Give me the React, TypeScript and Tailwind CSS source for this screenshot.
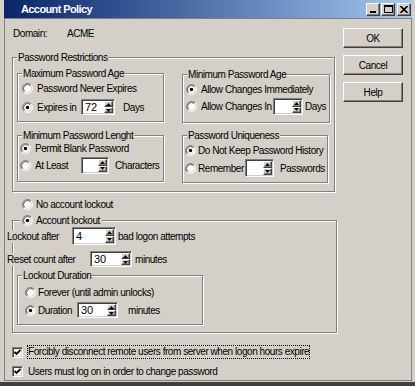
import React from "react";

const sunken =
  "border border-t-[#808080] border-l-[#808080] border-b-white border-r-white shadow-[inset_1px_1px_0_#404040,inset_-1px_-1px_0_#d4d0c8]";
const raised =
  "border border-t-white border-l-white border-b-[#404040] border-r-[#404040] shadow-[inset_-1px_-1px_0_#808080]";

function Radio({ checked }: { checked?: boolean }) {
  return (
    <svg width="11" height="11" viewBox="0 0 12 12" className="shrink-0">
      <circle cx="6" cy="6" r="5" fill="#fff" />
      <path d="M2.11 9.89A5.5 5.5 0 0 1 9.89 2.11" stroke="#808080" fill="none" strokeWidth="1" />
      <path d="M9.89 2.11A5.5 5.5 0 0 1 2.11 9.89" stroke="#ffffff" fill="none" strokeWidth="1" />
      <path d="M2.82 9.18A4.5 4.5 0 0 1 9.18 2.82" stroke="#404040" fill="none" strokeWidth="1" />
      <path d="M9.18 2.82A4.5 4.5 0 0 1 2.82 9.18" stroke="#d4d0c8" fill="none" strokeWidth="1" />
      {checked && <circle cx="6" cy="6" r="1.9" fill="#000" />}
    </svg>
  );
}

function Check() {
  return (
    <div className={`${sunken} bg-white w-[11px] h-[11px] flex items-center justify-center shrink-0`}>
      <svg width="7" height="7" viewBox="0 0 7 7">
        <polyline points="0.5,3 2.5,5 6.5,1" stroke="#000" strokeWidth="1.8" fill="none" />
      </svg>
    </div>
  );
}

function SpinButton({ up }: { up?: boolean }) {
  return (
    <div className={`${raised} bg-[#d4d0c8] flex-1 flex items-center justify-center`}>
      <svg width="5" height="3" viewBox="0 0 5 3">
        <polygon points={up ? "2.5,0 5,3 0,3" : "0,0 5,0 2.5,3"} fill="#000" />
      </svg>
    </div>
  );
}

function Spin({ className, value }: { className: string; value?: string }) {
  return (
    <div className={`${sunken} bg-white flex shrink-0 ${className}`}>
      <div className="flex-1 flex items-center pl-[3px] text-[11px] tracking-[-0.2px]">{value}</div>
      <div className="w-[9px] flex flex-col my-[1px] mr-[1px]">
        <SpinButton up />
        <SpinButton />
      </div>
    </div>
  );
}

function Group({
  label,
  className,
  legendClass = "left-[4px] px-[1px]",
  children,
}: {
  label: React.ReactNode;
  className: string;
  legendClass?: string;
  children?: React.ReactNode;
}) {
  return (
    <div
      className={`relative border border-[#808080] shadow-[1px_1px_0_#fff,inset_1px_1px_0_#fff] shrink-0 ${className}`}
    >
      <div className={`absolute -top-[7px] bg-[#d4d0c8] leading-[13px] flex items-center ${legendClass}`}>
        {label}
      </div>
      {children}
    </div>
  );
}

function Button({ children }: { children: React.ReactNode }) {
  return (
    <div className={`${raised} bg-[#d4d0c8] w-[60px] h-[20px] flex items-center justify-center`}>
      {children}
    </div>
  );
}

function CaptionButton({ children }: { children: React.ReactNode }) {
  return (
    <div className={`${raised} bg-[#d4d0c8] w-[14px] h-[13px] flex items-center justify-center`}>
      {children}
    </div>
  );
}

export default function App() {
  return (
    <div className="w-[415px] h-[386px] bg-[#d4d0c8] flex flex-col pl-[4px] pr-[3px] pb-[1px] border-b-[4px] border-b-[#404040] font-['Liberation_Sans',Arial,sans-serif] text-[10px] tracking-[-0.45px] leading-[13px] text-black overflow-hidden">
      {/* Title bar */}
      <div className="h-[18px] shrink-0 flex items-center bg-linear-to-r from-[#0a246a] to-[#a6caf0] pl-[17px] pr-[1px]">
        <span className="text-white font-bold text-[11px] tracking-[-0.6px]">Account Policy</span>
        <div className="ml-auto flex items-center">
          <CaptionButton>
            <svg width="8" height="7" viewBox="0 0 8 7">
              <rect x="1" y="5" width="6" height="2" fill="#000" />
            </svg>
          </CaptionButton>
          <div className="ml-[1px]">
            <CaptionButton>
              <svg width="9" height="8" viewBox="0 0 9 8">
                <rect x="0.5" y="0.5" width="8" height="7" fill="none" stroke="#000" />
                <rect x="0" y="0" width="9" height="2" fill="#000" />
              </svg>
            </CaptionButton>
          </div>
          <div className="ml-[2px]">
            <CaptionButton>
              <svg width="8" height="7" viewBox="0 0 8 7">
                <path d="M0.5 0 L7.5 7 M7.5 0 L0.5 7" stroke="#000" strokeWidth="1.6" />
              </svg>
            </CaptionButton>
          </div>
        </div>
      </div>

      {/* Client */}
      <div className="flex-1 flex border-t border-l border-r border-b border-[#808080] pl-[7px] pt-[8px]">
        {/* Left column */}
        <div className="w-[325px] flex flex-col shrink-0">
          <div className="h-[13px] flex items-center pl-[1px]">
            <span className="w-[54px]">Domain:</span>
            <span>ACME</span>
          </div>

          {/* Password Restrictions */}
          <Group label="Password Restrictions" className="mt-[17px] w-[323px] h-[135px] pt-[15px] pl-[4px]">
            <div className="flex items-start">
              <Group label="Maximum Password Age" className="w-[147px] h-[49px] pt-[8px] pl-[4px]">
                <div className="h-[13px] flex items-center">
                  <Radio />
                  <span className="ml-[4px]">Password Never Expires</span>
                </div>
                <div className="mt-[4px] flex items-center">
                  <Radio checked />
                  <span className="ml-[4px] w-[44px]">Expires in</span>
                  <Spin className="w-[34px] h-[16px]" value="72" />
                  <span className="ml-[8px]">Days</span>
                </div>
              </Group>
              <Group label="Minimum Password Age" className="ml-[18px] mt-[1px] w-[148px] h-[49px] pt-[8px] pl-[3px]">
                <div className="h-[13px] flex items-center">
                  <Radio checked />
                  <span className="ml-[4px]">Allow Changes Immediately</span>
                </div>
                <div className="mt-[2px] flex items-center">
                  <Radio />
                  <span className="ml-[4px] w-[72px]">Allow Changes In</span>
                  <Spin className="w-[30px] h-[17px]" />
                  <span className="ml-[2px]">Days</span>
                </div>
              </Group>
            </div>
            <div className="mt-[12px] flex items-start">
              <Group label="Minimum Password Lenght" className="w-[147px] h-[47px] pt-[6px] pl-[2px]">
                <div className="h-[13px] flex items-center">
                  <Radio checked />
                  <span className="ml-[4px]">Permit Blank Password</span>
                </div>
                <div className="mt-[2px] flex items-center">
                  <Radio />
                  <span className="ml-[4px] w-[46px]">At Least</span>
                  <Spin className="w-[28px] h-[17px]" />
                  <span className="ml-[6px]">Characters</span>
                </div>
              </Group>
              <Group label="Password Uniqueness" className="ml-[18px] w-[146px] h-[48px] pt-[8px] pl-[2px]">
                <div className="h-[13px] flex items-center">
                  <Radio checked />
                  <span className="ml-[2px]">Do Not Keep Password History</span>
                </div>
                <div className="mt-[2px] flex items-center">
                  <Radio />
                  <span className="ml-[2px] w-[47px]">Remember</span>
                  <Spin className="w-[29px] h-[18px]" />
                  <span className="ml-[6px]">Passwords</span>
                </div>
              </Group>
            </div>
          </Group>

          {/* No account lockout */}
          <div className="mt-[6px] h-[13px] flex items-center pl-[10px]">
            <Radio />
            <span className="ml-[3px]">No account lockout</span>
          </div>

          {/* Account lockout */}
          <Group
            label={
              <>
                <Radio checked />
                <span className="ml-[3px]">Account lockout</span>
              </>
            }
            legendClass="left-[7px] px-[2px]"
            className="mt-[9px] w-[325px] h-[113px] pt-[6px]"
          >
            <div className="flex items-center">
              <span className="relative -ml-[6px] w-[65px] bg-[#d4d0c8]">Lockout after</span>
              <Spin className="w-[44px] h-[18px]" value="4" />
              <span className="ml-[2px]">bad logon attempts</span>
            </div>
            <div className="mt-[6px] flex items-center">
              <span className="relative -ml-[6px] w-[83px] bg-[#d4d0c8]">Reset count after</span>
              <Spin className="w-[42px] h-[16px]" value="30" />
              <span className="ml-[3px]">minutes</span>
            </div>
            <Group label="Lockout Duration" className="mt-[8px] ml-[4px] w-[186px] h-[50px] pt-[10px] pl-[7px]">
              <div className="h-[13px] flex items-center">
                <Radio />
                <span className="ml-[2px]">Forever (until admin unlocks)</span>
              </div>
              <div className="mt-[3px] flex items-center">
                <Radio checked />
                <span className="ml-[2px] w-[39px]">Duration</span>
                <Spin className="w-[41px] h-[16px]" value="30" />
                <span className="ml-[10px]">minutes</span>
              </div>
            </Group>
          </Group>

          {/* Checkboxes */}
          <div className="mt-[12px] h-[14px] flex items-center">
            <Check />
            <span className="ml-[4px] border border-dotted border-black leading-[12px]">
              Forcibly disconnect remote users from server when logon hours expire
            </span>
          </div>
          <div className="mt-[6px] h-[13px] flex items-center">
            <Check />
            <span className="ml-[4px] border border-transparent leading-[11px]">
              Users must log on in order to change password
            </span>
          </div>
        </div>

        {/* Right buttons */}
        <div className="ml-[6px] mt-[1px] flex flex-col gap-[7px] shrink-0">
          <Button>OK</Button>
          <Button>Cancel</Button>
          <Button>Help</Button>
        </div>
      </div>
    </div>
  );
}
